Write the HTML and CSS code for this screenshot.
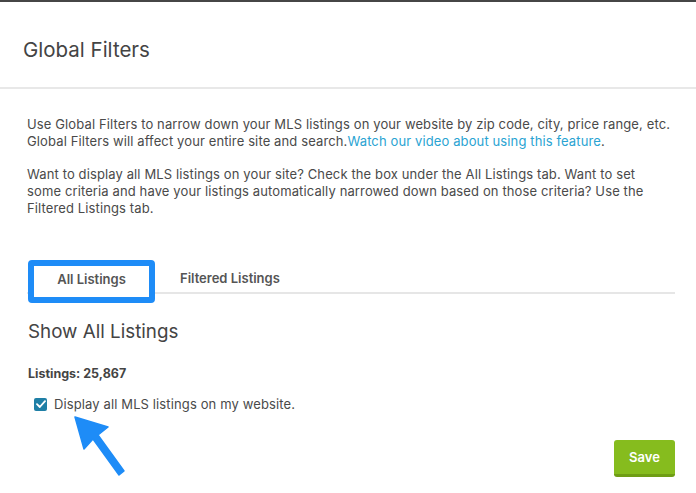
FILE: index.html
```html
<!DOCTYPE html>
<html>
<head>
<meta charset="utf-8">
<link rel="stylesheet" href="styles.css">
</head>
<body>
<div class="page">
  <header class="header">
    <h1 class="title">Global Filters</h1>
  </header>
  <main class="content">
    <p class="para">Use Global Filters to narrow down your MLS listings on your website by zip code, city, price range, etc.<br>Global Filters will affect your entire site and search.<a class="link" href="#">Watch our video about using this feature</a>.</p>
    <p class="para">Want to display all MLS listings on your site? Check the box under the All Listings tab. Want to set<br>some criteria and have your listings automatically narrowed down based on those criteria? Use the<br>Filtered Listings tab.</p>
    <div class="tabs">
      <div class="tab tab-active">All Listings</div>
      <div class="tab">Filtered Listings</div>
    </div>
    <h2 class="subtitle">Show All Listings</h2>
    <div class="count">Listings: 25,867</div>
    <label class="check-row">
      <span class="checkbox">
        <svg width="10" height="8" viewBox="0 0 10 8"><path d="M1 4.2 L3.8 7 L9 1.2" fill="none" stroke="#fff" stroke-width="1.8" stroke-linecap="round" stroke-linejoin="round"/></svg>
      </span>
      <span class="check-label">Display all MLS listings on my website.</span>
      <svg class="arrow" width="64" height="66" viewBox="0 0 64 66">
        <path d="M5 4 L38 14 L28 22 L54 58 L49 62 L23 26 L14 36 Z" fill="#1e8cf7" stroke="#1e8cf7" stroke-width="1.5" stroke-linejoin="round"/>
      </svg>
    </label>
    <div class="footer">
      <button class="save">Save</button>
    </div>
  </main>
</div>
</body>
</html>
```
FILE: styles.css
```css
* { box-sizing: border-box; }
html, body { margin: 0; padding: 0; background: #fff; }
body {
  font-family: Inter, "Noto Sans", "DejaVu Sans", sans-serif;
  color: #4a4a4a;
  width: 696px;
  height: 493px;
  overflow: hidden;
}
.page {
  border-top: 2px solid #464646;
}
.header {
  height: 87px;
  border-bottom: 2px solid #e8e8e8;
  display: flex;
  align-items: center;
  padding-left: 23px;
  padding-top: 10px;
}
.title {
  margin: 0;
  font-weight: 400;
  font-size: 20.5px;
  color: #444;
}
.content {
  padding: 27px 21px 0 27px;
}
.para {
  margin: 0 0 16px 0;
  font-size: 13px;
  letter-spacing: 0.12px;
  line-height: 17px;
  width: 660px;
}
.link {
  color: #2aa3d2;
  text-decoration: none;
}
.tabs {
  margin-top: 43px;
  display: flex;
  align-items: flex-start;
  border-bottom: 2px solid #e6e6e6;
  height: 34px;
}
.tab {
  font-size: 13px;
  font-weight: 600;
  color: #555;
  padding: 10px 25px 0 25px;
}
.tab-active {
  width: 127px;
  height: 43px;
  margin-left: 1px;
  border: 6px solid #1e8cf7;
  border-radius: 4px;
  background: #fff;
  padding: 5px 0 0 0;
  text-align: center;
  position: relative;
  z-index: 1;
}
.subtitle {
  margin: 26px 0 0 1px;
  font-size: 18.8px;
  font-weight: 400;
  color: #444;
}
.count {
  margin: 23px 0 0 1px;
  font-size: 12.5px;
  font-weight: 700;
  color: #444;
}
.check-row {
  position: relative;
  display: flex;
  align-items: center;
  margin: 15px 0 0 7px;
  gap: 7px;
}
.checkbox {
  width: 13px;
  height: 13px;
  border-radius: 2px;
  background: #1f7fa6;
  display: flex;
  align-items: center;
  justify-content: center;
}
.check-label {
  font-size: 13px;
  letter-spacing: 0.12px;
}
.arrow {
  position: absolute;
  left: 36px;
  top: 17px;
}
.footer {
  display: flex;
  justify-content: flex-end;
  margin-top: 28px;
}
.save {
  width: 61px;
  height: 37px;
  border: none;
  border-radius: 3px;
  background: #86bc1e;
  border-bottom: 3px solid #6f9d15;
  color: #fff;
  font-family: inherit;
  font-weight: 600;
  font-size: 13px;
  padding: 0;
}
```
